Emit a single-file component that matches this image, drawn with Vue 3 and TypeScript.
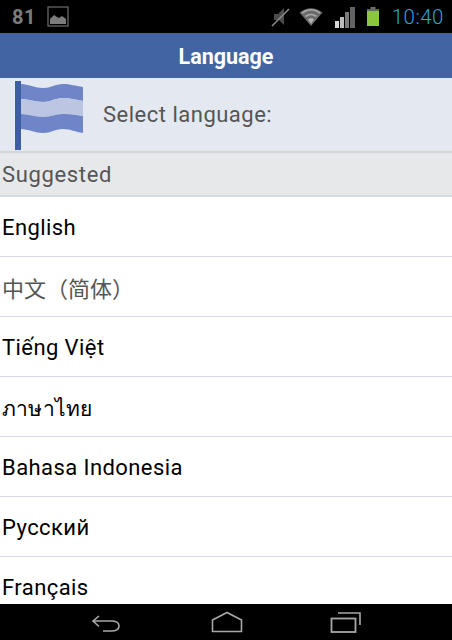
<script setup lang="ts">
const languages: { name: string; cls?: string }[] = [
  { name: 'English' },
  { name: '中文（简体）', cls: 'cjk' },
  { name: 'Tiếng Việt' },
  { name: 'ภาษาไทย', cls: 'thai' },
  { name: 'Bahasa Indonesia' },
  { name: 'Русский' },
  { name: 'Français' },
]
</script>

<template>
  <div class="phone">
    <div class="status">
      <span class="count">81</span>
      <svg class="pic" width="22" height="21" viewBox="0 0 22 21">
        <rect x="1" y="1" width="20" height="19" fill="none" stroke="#6e6e6e" stroke-width="1.2" />
        <path d="M3 18V13l4-4 3 2 2 1 3-2 4 3v5z" fill="#7c7c7c" />
      </svg>
      <span class="spacer"></span>
      <svg class="mute" width="20" height="22" viewBox="0 0 20 22">
        <path d="M3 8h4l6-6v17l-5-5H3z" fill="#4c4c4c" />
        <path d="M1 20 18 3" stroke="#8a8a8a" stroke-width="1.6" />
      </svg>
      <svg class="wifi" width="24" height="19" viewBox="0 0 24 19">
        <path d="M0.5 5.5Q12-3 23.5 5.5L12 19z" fill="#6a6a6a" />
        <path d="M3 6Q12-.5 21 6" fill="none" stroke="#a8a8a8" stroke-width="1.6" />
        <path d="M6.5 9.5Q12 5.5 17.5 9.5" fill="none" stroke="#a8a8a8" stroke-width="1.6" />
        <path d="M9 12.5Q12 10 15 12.5L12 17z" fill="#b4b4b4" />
      </svg>
      <svg class="bars" width="22" height="22" viewBox="0 0 22 22">
        <rect x="0" y="15" width="4" height="7" fill="#d8d8d8" />
        <rect x="5" y="11" width="4" height="11" fill="#bcbcbc" />
        <rect x="10" y="6" width="4" height="16" fill="#7c7c7c" />
        <rect x="15" y="1" width="5" height="21" fill="#636363" />
      </svg>
      <svg class="battery" width="12" height="19" viewBox="0 0 12 19">
        <rect x="3.500" y="0" width="5" height="3" fill="#6d6d6d" />
        <rect x="0" y="2" width="12" height="17" fill="#8cc63f" />
        <rect x="0" y="2" width="12" height="2" fill="#5e6d4a" />
      </svg>
      <span class="clock">10:40</span>
    </div>

    <header class="title">Language</header>

    <div class="select">
      <svg class="flag" width="70" height="69" viewBox="0 0 70 69">
        <path d="M6 3C13 3 20 7 28 7S40 3 48 3 60 5 68 6V20C60 19 56 17 48 17S36 21 28 21 13 18 6 18z" fill="#6f85c8" />
        <path d="M6 18C13 18 20 21 28 21S40 17 48 17 60 19 68 20V35C60 34 56 33 48 33S36 36 28 36 13 33 6 33z" fill="#bcc6e2" />
        <path d="M6 33C13 33 20 36 28 36S40 33 48 33 60 34 68 35V52C60 51 56 48 48 48S36 52 28 52 13 48 6 48z" fill="#6f85c8" />
        <rect x="0" y="0" width="6" height="69" fill="#3d5ea5" />
      </svg>
      <span class="select-text">Select language:</span>
    </div>

    <div class="suggested">Suggested</div>

    <ul class="list">
      <li v-for="lang in languages" :key="lang.name" class="row" :class="lang.cls">{{ lang.name }}</li>
    </ul>

    <nav class="nav">
      <svg width="30" height="22" viewBox="0 0 30 22">
        <path d="M8 5 2 10l6 5.500M2 10h18q8 0 8 5t-8 5H12" fill="none" stroke="#a8a8a8" stroke-width="1.600" />
      </svg>
      <svg width="32" height="22" viewBox="0 0 32 22">
        <path d="M1.500 9 16 1.500 30.500 9v11.500h-29z" fill="none" stroke="#a8a8a8" stroke-width="1.600" />
      </svg>
      <svg class="recents" width="32" height="22" viewBox="0 0 32 22">
        <rect x="1.500" y="7.500" width="24" height="13.500" fill="none" stroke="#a8a8a8" stroke-width="1.800" />
        <path d="M8 2h22v12" fill="none" stroke="#a8a8a8" stroke-width="1.600" />
      </svg>
    </nav>
  </div>
</template>

<style scoped>
.phone {
  width: 452px;
  height: 640px;
  display: flex;
  flex-direction: column;
  overflow: hidden;
  background: #fff;
  font-family: Roboto, "Noto Sans", "Noto Sans CJK SC", sans-serif;
}
.status {
  flex: 0 0 33px;
  background: #000;
  display: flex;
  align-items: center;
  padding: 0 8px 0 12px;
}
.count {
  color: #7c7c7c;
  font-size: 20px;
  font-weight: 700;
  letter-spacing: 0.6px;
  margin-right: 11px;
}
.spacer {
  flex: 1;
}
.mute {
  margin-right: 8px;
}
.wifi {
  margin-right: 12px;
}
.bars {
  margin-right: 10px;
}
.battery {
  margin-right: 13px;
}
.clock {
  color: #2aa6d8;
  font-size: 20.5px;
  font-weight: 300;
  font-family: Roboto, sans-serif;
  letter-spacing: 0.5px;
}
.title {
  flex: 0 0 45px;
  box-sizing: border-box;
  padding-top: 2px;
  background: #4264a2;
  color: #fff;
  font-size: 21.5px;
  font-weight: 700;
  display: flex;
  align-items: center;
  justify-content: center;
}
.select {
  flex: 0 0 73px;
  box-sizing: border-box;
  background: #e4e8f1;
  display: flex;
  align-items: center;
  padding-left: 15px;
  color: #555;
  font-size: 22px;
  letter-spacing: 0.5px;
}
.flag {
  margin-right: 18px;
  align-self: flex-end;
  margin-bottom: 1px;
}
.suggested {
  flex: 0 0 46px;
  box-sizing: border-box;
  background: #e6e8e9;
  border-top: 2px solid #d4d4d4;
  border-bottom: 2px solid #d5d9e2;
  display: flex;
  align-items: center;
  padding-left: 2px;
  color: #555;
  font-size: 22px;
  letter-spacing: 0.65px;
}
.list {
  flex: 1;
  margin: 0;
  padding: 0;
  list-style: none;
  overflow: hidden;
}
.row {
  height: 60px;
  box-sizing: border-box;
  border-bottom: 1px solid #d5d9e4;
  display: flex;
  align-items: center;
  padding: 2px 0 0 2px;
  color: #000;
  font-size: 22px;
  letter-spacing: 0.42px;
}
.cjk {
  color: #555;
  letter-spacing: 0;
  padding-top: 0;
}
.thai {
  font-size: 21px;
  letter-spacing: 0.2px;
  padding-top: 4px;
}
.nav {
  flex: 0 0 36px;
  background: #000;
  display: flex;
  align-items: center;
  padding-left: 91px;
  gap: 90px;
}
.recents {
  margin-left: -3px;
}
</style>
